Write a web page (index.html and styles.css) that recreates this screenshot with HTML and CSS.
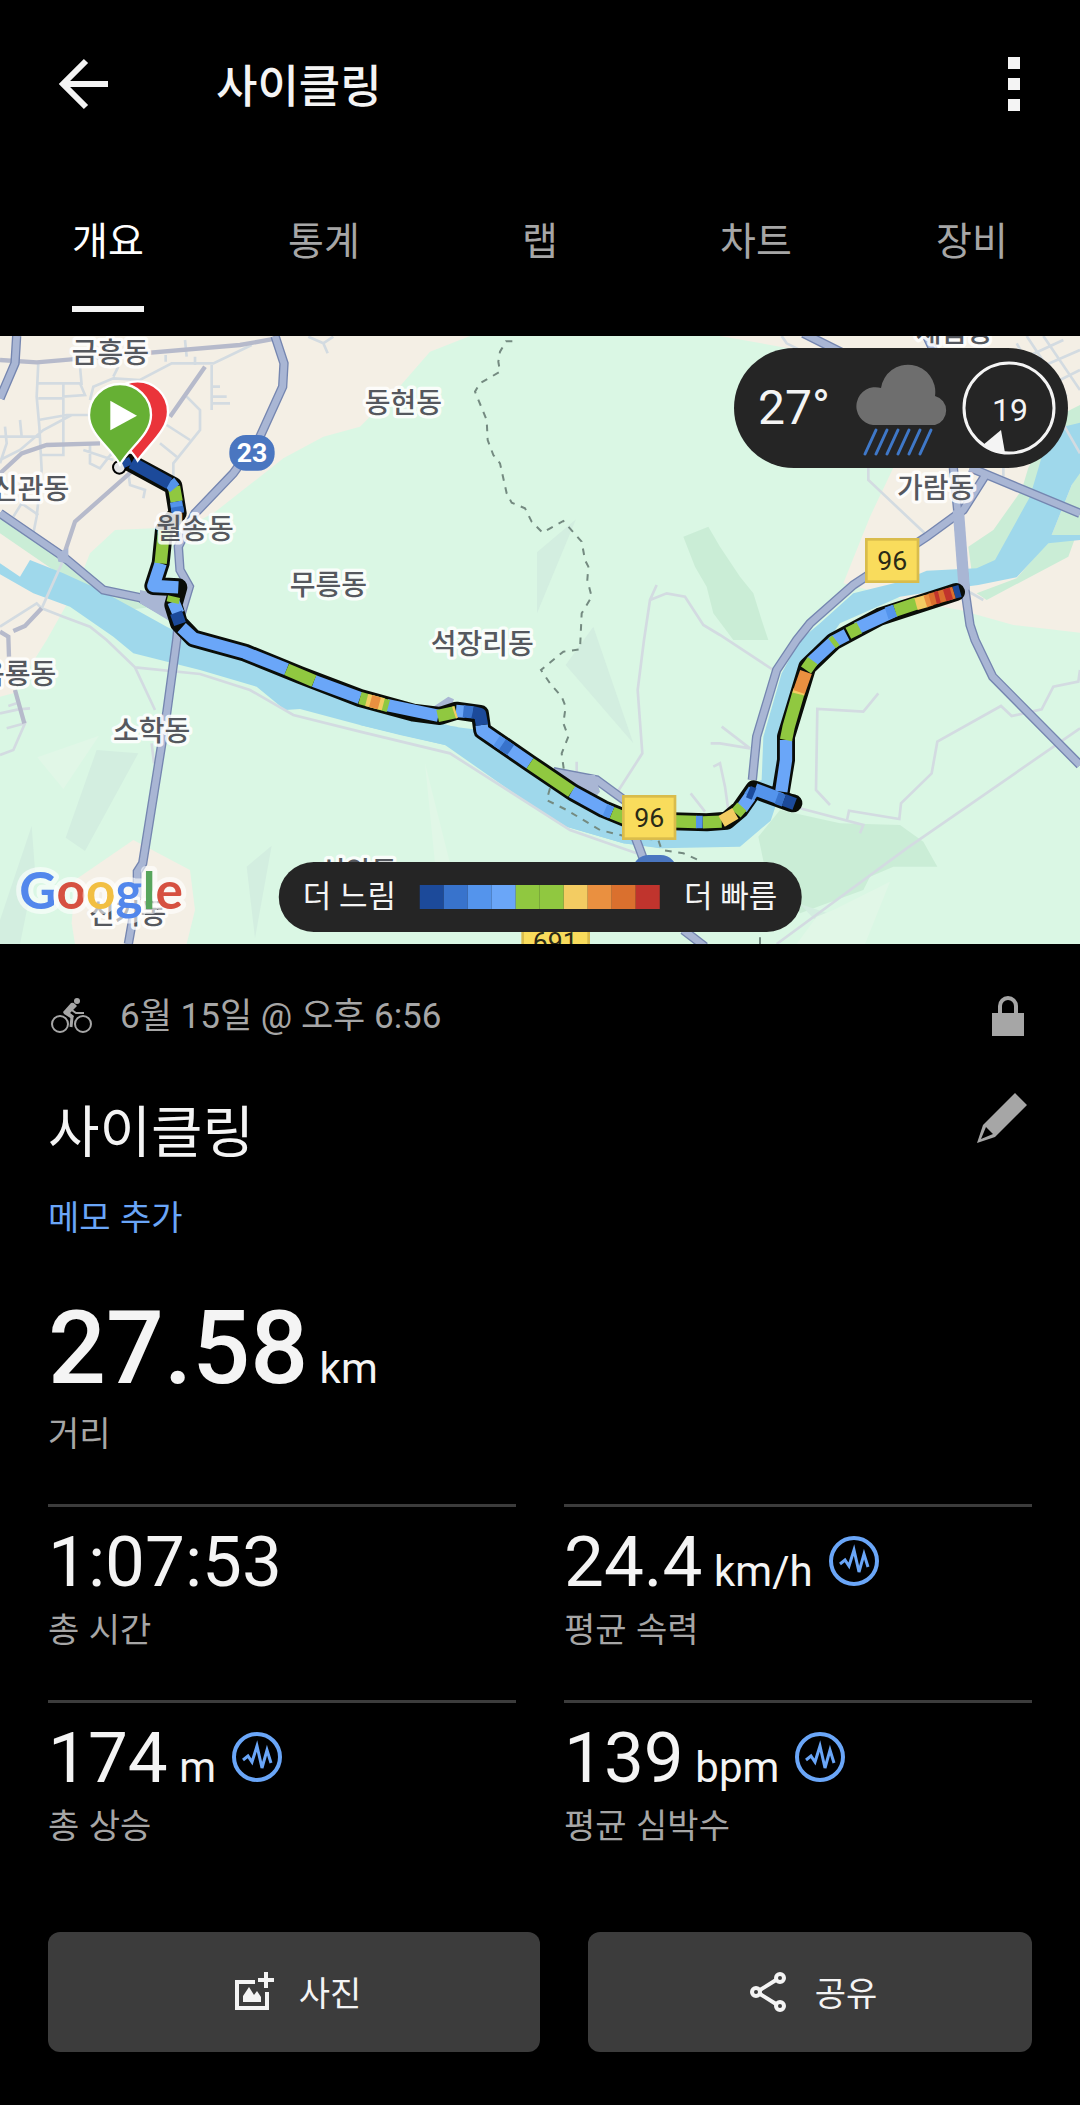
FILE: index.html
```html
<!DOCTYPE html>
<html lang="ko">
<head>
    <meta charset="UTF-8">
    <meta name="viewport" content="width=device-width, initial-scale=1">
    <title>사이클링</title>
    <link rel="stylesheet" href="styles.css">
</head>
<body>
    <header class="topbar">
        <button class="icon-btn back" aria-label="뒤로">
            <svg width="72" height="72" viewBox="0 0 72 72"><path d="M60 36H17M38 13L15 36l23 23" fill="none" stroke="#f4f4f4" stroke-width="6"/></svg>
        </button>
        <h1>사이클링</h1>
        <button class="icon-btn" aria-label="메뉴">
            <svg width="48" height="72" viewBox="0 0 48 72"><path d="M24 9h12v12H24zM24 30h12v12H24zM24 51h12v12H24z" fill="#f4f4f4"/></svg>
        </button>
    </header>
    <nav class="tabs">
        <a href="#" class="selected">개요</a>
        <a href="#">통계</a>
        <a href="#">랩</a>
        <a href="#">차트</a>
        <a href="#">장비</a>
    </nav>

    <section class="map">
        <svg class="map-canvas" viewBox="0 18 3240 1824">
            <rect y="18" width="3240" height="1824" fill="#daf7e4"/>
            <!-- built-up areas -->
            <g fill="#f4efe5">
                <path d="M0 18H1410L1290 65 1190 180 1080 290 970 320 850 385 640 550 560 590 345 600 270 670 230 770 140 930 40 1090 0 1100z"/>
                <path d="M2160 18L2340 50 2560 90 2680 413 2610 560 2530 760 2740 815 2880 840 3040 885 3240 908V18z"/>
                <path d="M400 1530L570 1620 585 1740 560 1842H225L215 1780 225 1650z"/>
            </g>
            <!-- woods and relief -->
            <g fill="#caedd6">
                <path d="M0 560L190 690 310 780 420 810 460 830 400 838 190 740 0 610z"/>
                <path d="M2050 620L2125 590 2160 650 2220 740 2260 790 2285 870 2305 930H2200L2140 850 2120 770 2085 710z"/>
                <path d="M3085 413L3065 480 2980 600 2905 650 2915 725 3000 700 3110 500 3190 340 3240 290V225L3170 260z"/>
                <path d="M3240 420L3215 465 3155 615 3240 615zM2930 790L3050 745 3140 640 3225 625 3205 680 2960 810z"/>
                <path d="M2275 1520L2340 1440 2520 1480 2700 1485 2770 1535 2812 1610H2680L2610 1640 2590 1680 2400 1750 2300 1640z"/>
            </g>
            <g fill="#d3eee0">
                <path d="M1611 667L1728 568 1611 850zM1780 890L1697 1005 1900 1240z"/>
                <path d="M290 1260L415 1270 255 1563 197 1523zM95 1488L105 1620 60 1842H0V1770zM740 1610L815 1547 765 1825z"/>
                <path d="M2400 1722L2500 1755 2515 1790 2495 1803 2440 1765z"/>
            </g>
            <g fill="#e1f7e7">
                <path d="M112 1282L297 1217 190 1377zM1275 1300L1350 1600H1305zM2500 1740L2670 1655 2595 1842H2390L2450 1760z"/>
            </g>
            <!-- river -->
            <path fill="#9fd8eb" d="M0 700L60 740 90 690 190 730 300 780 400 835 500 890 580 930 720 975 900 1040 1080 1108 1360 1190 1440 1200 1600 1330 1800 1430 1870 1475 2100 1490 2220 1460 2260 1360 2285 1350 2290 1220 2345 1030 2400 930 2460 880 2560 790 2700 755 2780 722 2930 715 2985 690 3090 500 3140 330 3190 290 3240 278V430L3215 465 3155 615H3240V630L3145 640 3050 742 2935 765 2860 775 2700 800 2520 880 2420 1020 2370 1200 2340 1390 2312 1472 2220 1550 1980 1555 1870 1540 1700 1490 1630 1420 1615 1380 1500 1290 1335 1245 1200 1215 1080 1185 900 1137 855 1140 770 1070 600 1020 400 970 340 920 210 830 100 790 0 733z"/>
            <path fill="#9fd8eb" d="M1290 1180L1370 1190 1620 1350 1625 1380 1700 1430 1860 1500 1990 1510V1555L1870 1540 1700 1490 1600 1430 1335 1245 1080 1185V1110z"/>
            <!-- small streets -->
            <g class="street">
                <path d="M115 97L110 200 118 290 125 420 110 560 100 610M110 160H240L255 195 190 200V160M115 205H190V375H125M240 110L245 165M0 320H120M115 270L200 255 300 255M0 390L60 360 130 300 215 255M60 270L65 320M15 290L20 340 0 400"/>
                <path d="M340 140L355 110M270 210L280 170 340 145 420 150 515 100H640L755 45M635 105V240M635 170H660M635 200H680M635 220H690M560 200L600 240V300L520 400V450M500 285L570 330M480 340L530 380M555 30L560 80M497 75V95M585 80V105M925 20L970 40 1000 20M970 40L983 70"/>
                <path d="M270 345V400L300 415 335 370M250 360L340 390M385 430L390 465 435 480 430 505M40 560L65 520 115 555M190 690L125 835 190 860 270 890 320 930 405 1012 465 1140M125 835L110 820 0 890M405 1012L600 1032 750 1080 880 1155 1080 1205 1350 1270 1710 1500 1910 1570M455 1240L462 1300M0 1150L55 1138 90 1135M20 1195L75 1180 40 1260 0 1275M25 1128L50 1120"/>
                <path d="M1970 765L1950 810 1932 930 1913 1080 1927 1270 1850 1390M1950 810L2000 790 2055 800 2110 885 2160 915 2320 1020M2132 1240H2160L2250 1255M2165 1190L2250 1255M2140 1310L2160 1300 2175 1370 2185 1440M1730 1295V1350M2072 1390L2115 1445"/>
                <path d="M2345 18L2360 40 2420 70M2605 413V450L2780 615M2635 1090L2590 1145 2452 1137 2448 1380 2490 1425M2400 1435L2590 1485 2580 1510M2540 1475L2547 1442 2698 1467 2703 1420 2795 1330 2812 1235 3003 1128 3035 1158 3125 1138 3160 1070 3235 1055 3240 1020M3240 1195L2720 1555 2330 1842"/>
                <path d="M2880 770L2950 810M3050 40L3240 370M3080 18L3200 200M3130 18L3240 180M3060 90L3190 30M3080 130L3240 60M3100 190L3240 120M3010 413V440"/>
            </g>
            <!-- secondary roads -->
            <g fill="none" stroke="#b6bacb" stroke-width="13">
                <path d="M0 90L110 97 250 85 720 45 830 25M615 110L510 260M0 430L65 370 140 345 300 340M400 420L225 575 190 680M125 835L75 888 40 903M0 905L25 920 27 980M45 1080L73 1180"/>
            </g>
            <!-- highways -->
            <g class="road-edge">
                <path id="r1" d="M825 18L852 100 848 170 780 320 700 430 585 550 535 650 540 720 568 770 535 880 530 930 500 1150 428 1600 412 1625V1690L385 1842"/>
                <path id="r2" d="M0 550L190 680 310 780 420 803 520 860"/>
                <path id="r3" d="M2860 413L2875 560 2895 780 2910 885 2925 930 2978 1040 3240 1305"/>
                <path id="r4" d="M2910 413L3240 550M2410 10L2540 75M2780 18L2800 60"/>
                <path id="r5" d="M2960 430L2890 540 2780 620 2560 765 2430 880 2390 930 2330 1020 2270 1220 2257 1350"/>
                <path id="r6" d="M50 18L45 100 0 205M1660 1325L1790 1350 1900 1430M1905 1520L1935 1600M2050 1800L2115 1850"/>
            </g>
            <g class="road">
                <use href="#r1"/><use href="#r2"/><use href="#r3"/><use href="#r4"/><use href="#r5"/><use href="#r6"/>
            </g>
            <path fill="#a9b6d4" d="M420 780L520 800V880L420 820zM170 670L205 655 205 700 175 695zM1690 1335L1785 1335 1800 1385 1770 1420 1740 1400zM1300 1130L1345 1100 1362 1108 1350 1140z"/>
            <path fill="none" stroke="#a9b6d4" stroke-width="34" d="M2875 540L2893 780"/>
            <!-- administrative border -->
            <g fill="none" stroke="#748a80" stroke-width="6" stroke-dasharray="20 20">
                <path d="M1537 34H1518L1500 65 1495 95 1500 125 1440 160 1425 185 1460 270 1463 330 1480 375 1500 400 1520 490 1535 518 1575 535 1595 575 1628 608 1690 573 1745 635 1755 690 1765 710 1762 750 1775 800 1745 850 1740 958 1690 965 1623 1020 1650 1060 1685 1100 1697 1130 1690 1180 1705 1220 1685 1270 1693 1330"/>
                <path d="M1650 1375L1640 1410 1700 1440 1800 1500 1880 1520 1975 1530 1985 1560 2050 1570 2100 1592M2280 1822V1842"/>
            </g>

            <!-- recorded track -->
            <g class="track-edge">
                <path d="M390 398L520 468 533 550 492 600 482 700 460 768 535 772 520 825 537 880 580 925 735 968 900 1035 1080 1104 1240 1148 1320 1158 1370 1142 1440 1152 1447 1202 1590 1300 1720 1388 1810 1437 1890 1470 2120 1477 2180 1472 2220 1438 2262 1378 2370 1418 2380 1420M2340 1400L2358 1290 2358 1220 2422 1010 2500 935 2640 860 2850 792 2868 786"/>
            </g>
            <circle cx="358" cy="412" r="19" fill="#e6e6e6" stroke="#000" stroke-width="6"/>
            <path d="M368 403L392 392" stroke="#1c4a9a" stroke-width="24"/>
            <g class="track">
                <g stroke="#6aa6f8">
                    <path d="M482 700L460 768 535 772M520 815L535 850M545 893L580 925 735 968 860 1018M942 1053L1080 1104M1160 1125L1315 1157M1368 1143L1395 1145M1445 1185L1447 1202 1590 1300M1715 1385L1810 1437 1836 1448M2225 1435L2250 1400M2344 1385L2358 1290V1230M2435 995L2500 935 2540 914M2570 895L2685 842"/>
                </g>
                <g stroke="#90c840">
                    <path d="M522 470L530 515M492 600L482 700M522 800L518 818M860 1018L942 1053M1080 1104L1165 1128M1313 1158L1368 1146M1590 1300L1715 1385M1836 1448L1890 1470 2090 1476M2108 1477L2165 1475M2208 1450L2226 1430M2358 1230L2366 1190 2395 1090M2418 1020L2438 992M2496 940L2508 931M2545 910L2578 893M2685 842L2750 820"/>
                </g>
                <g stroke="#5494ec">
                    <path d="M1490 1232L1507 1243M1815 1440L1834 1448M2088 1476H2108M2265 1378L2345 1408M2248 1400L2262 1380M2660 850L2685 842M528 515L534 550M508 455L524 475"/>
                </g>
                <g stroke="#3873cc">
                    <path d="M1390 1144L1420 1147M1507 1243L1532 1260M2330 1404L2352 1412M531 530L534 548"/>
                </g>
                <g stroke="#1c4a9a">
                    <path d="M395 398L508 460M528 848L540 882M1418 1147L1440 1152 1446 1185M2245 1385L2262 1392M2352 1410L2384 1422M2862 788L2880 783"/>
                </g>
                <g stroke="#f3cc62">
                    <path d="M1100 1110L1150 1123M2165 1474L2206 1450M2748 822L2780 813M2395 1092L2398 1080M1362 1148L1368 1146"/>
                </g>
                <g stroke="#ea9040">
                    <path d="M1112 1113L1138 1120M2397 1086L2418 1026M2776 814L2795 808"/>
                </g>
                <path stroke="#da702e" d="M2790 809L2862 788"/>
                <path stroke="#c0342d" d="M2806 804L2818 801M2834 796L2854 790"/>
            </g>

            <!-- start and finish pins -->
            <path class="pin" fill="#ea343a" d="M413 392C390 350 322 310 322 245a91 91 0 0 1 182 0C504 300 450 340 413 392z"/>
            <path class="pin" fill="#66b034" d="M360 404C330 350 267 315 267 255a93 93 0 0 1 186 0C453 315 390 350 360 404z"/>
            <path fill="#fff" d="M331 212L411 257 331 301z"/>

            <!-- place names -->
            <g class="place">
                <text x="331" y="100">금흥동</text>
                <text x="1210" y="248">동현동</text>
                <text x="92" y="507">신관동</text>
                <text x="585" y="626">월송동</text>
                <text x="985" y="795">무릉동</text>
                <text x="1447" y="973">석장리동</text>
                <text x="53" y="1063">옥룡동</text>
                <text x="455" y="1232">소학동</text>
                <text x="383" y="1782">신기동</text>
                <text x="1075" y="1656">신암동</text>
                <text x="2863" y="36">새롬동</text>
                <text x="2807" y="504">가람동</text>
            </g>

            <!-- road numbers -->
            <rect x="688" y="315" width="136" height="107" rx="50" fill="#4a76c0"/>
            <rect x="1896" y="1575" width="136" height="107" rx="50" fill="#4a76c0"/>
            <text class="road-no light" x="756" y="397">23</text>
            <g fill="#f9dc5c" stroke="#d9bc4c" stroke-width="8">
                <rect x="2599" y="628" width="155" height="127"/>
                <rect x="1870" y="1399" width="155" height="127"/>
                <rect x="1568" y="1770" width="198" height="127"/>
            </g>
            <text class="road-no" x="2677" y="720">96</text>
            <text class="road-no" x="1948" y="1491">96</text>
            <text class="road-no" x="1666" y="1862">691</text>

            <text class="logo" x="58" y="1736"><tspan fill="#5287ec">G</tspan><tspan fill="#d65141">o</tspan><tspan fill="#f2bf42">o</tspan><tspan fill="#5287ec">g</tspan><tspan fill="#58a55c">l</tspan><tspan fill="#d65141">e</tspan></text>
        </svg>

        <div class="weather">
            <span class="temp">27°</span>
            <svg class="rain" width="96" height="96" viewBox="0 0 96 96">
                <path d="M19 65a19 19 0 1 1 8-37a27 27 0 0 1 54 8a15 15 0 0 1 0 29z" fill="#6e6e6e"/>
                <path d="M22 70L11 94M33 70L22 94M44 70L33 94M55 70L44 94M66 70L55 94M77 70L66 94" stroke="#3f78c8" stroke-width="3" stroke-linecap="round"/>
            </svg>
            <svg class="wind" width="94" height="94" viewBox="0 0 94 94">
                <circle cx="47" cy="47" r="45" fill="none" stroke="#f4f4f4" stroke-width="3"/>
                <path d="M39 69L21 84Q31 91 43 92z" fill="#f4f4f4"/>
                <text x="48" y="60">19</text>
            </svg>
        </div>

        <div class="legend">
            <span>더 느림</span>
            <div class="scale">
                <i class="s1"></i><i class="s2"></i><i class="s3"></i><i class="s4"></i><i class="s5"></i><i class="s5"></i><i class="s6"></i><i class="s7"></i><i class="s8"></i><i class="s9"></i>
            </div>
            <span>더 빠름</span>
        </div>
    </section>

    <main class="details">
        <div class="date-row">
            <svg width="48" height="48" viewBox="0 0 48 48">
                <g fill="none" stroke="#a6a6a6">
                    <circle cx="12" cy="32" r="8" stroke-width="2"/>
                    <circle cx="35" cy="32" r="8" stroke-width="2"/>
                    <path d="M21 16l7 5h8" stroke-width="2"/>
                    <path d="M18 20l6 5-1 10" stroke-width="3"/>
                </g>
                <path d="M15 20l8-9q2-1 4 1l2 2-7 7 4 3-2 3-8-5z" fill="#a6a6a6"/>
                <circle cx="29" cy="9" r="3" fill="#a6a6a6"/>
            </svg>
            <span>6월 15일 @ 오후 6:56</span>
            <svg class="lock" width="48" height="48" viewBox="0 0 48 48">
                <path d="M8 21h32v23H8z" fill="#a6a6a6"/>
                <path d="M16 22v-8a8 8 0 0 1 16 0v8" fill="none" stroke="#a6a6a6" stroke-width="4"/>
            </svg>
        </div>
        <div class="title-row">
            <h2>사이클링</h2>
            <button class="icon-btn" aria-label="이름 수정">
                <svg width="60" height="60" viewBox="0 0 60 60"><path fill="#a6a6a6" fill-rule="evenodd" d="M43 5L55 17 23 49 5 55 11 37zM14 39L9 51 21 46z"/></svg>
            </button>
        </div>
        <a href="#" class="memo">메모 추가</a>

        <div class="distance">27.58 <small>km</small></div>
        <div class="label">거리</div>

        <div class="stats">
            <div class="stat">
                <div class="value">1:07:53</div>
                <div class="label">총 시간</div>
            </div>
            <div class="stat">
                <div class="value">24.4 <small>km/h</small><a href="#" aria-label="속력 차트"><svg class="pulse" viewBox="0 0 50 50"><circle cx="25" cy="25" r="23"/><path d="M11 28l5-4 4 6 5-16 5 22 5-18 4 13"/></svg></a></div>
                <div class="label">평균 속력</div>
            </div>
            <div class="stat">
                <div class="value">174 <small>m</small><a href="#" aria-label="고도 차트"><svg class="pulse" viewBox="0 0 50 50"><circle cx="25" cy="25" r="23"/><path d="M11 28l5-4 4 6 5-16 5 22 5-18 4 13"/></svg></a></div>
                <div class="label">총 상승</div>
            </div>
            <div class="stat">
                <div class="value">139 <small>bpm</small><a href="#" aria-label="심박수 차트"><svg class="pulse" viewBox="0 0 50 50"><circle cx="25" cy="25" r="23"/><path d="M11 28l5-4 4 6 5-16 5 22 5-18 4 13"/></svg></a></div>
                <div class="label">평균 심박수</div>
            </div>
        </div>
    </main>

    <footer class="actions">
        <div class="action">
            <button>
                <svg width="48" height="48" viewBox="0 0 48 48">
                    <path d="M28 14H10v26h30V24" fill="none" stroke="#f4f4f4" stroke-width="4"/>
                    <path d="M16 34v-6l6-9 5 8 3-4 4 6v5z" fill="#f4f4f4"/>
                    <path d="M39 4v16M31 12h16" stroke="#f4f4f4" stroke-width="4"/>
                </svg>
                사진
            </button>
        </div>
        <div class="action">
            <button>
                <svg width="48" height="48" viewBox="0 0 48 48" fill="none" stroke="#f4f4f4" stroke-width="4">
                    <circle cx="37" cy="10" r="4"/>
                    <circle cx="13" cy="24" r="4"/>
                    <circle cx="37" cy="38" r="4"/>
                    <path d="M17 22l16-10M17 26l16 10"/>
                </svg>
                공유
            </button>
        </div>
    </footer>
</body>
</html>
```
FILE: styles.css
```css
*{
    margin: 0;
    padding: 0;
    box-sizing: border-box;
}
body{
    background: #000;
    color: #f4f4f4;
    font-family: Roboto, "Noto Sans CJK KR", sans-serif;
    font-size: 35px;
    line-height: 48px;
}
h1,h2,.memo,.label,.action button{
    font-family: "Noto Sans CJK KR", sans-serif;
}
a{
    color: inherit;
    text-decoration: none;
}
svg{
    display: block;
}
button{
    border: 0;
    background: none;
    color: inherit;
    font: inherit;
    cursor: pointer;
}
.icon-btn{
    flex: none;
}

/* header */
.topbar{
    display: flex;
    align-items: center;
    height: 168px;
    padding: 0 48px;
}
.topbar h1{
    flex: 1;
    margin-left: 96px;
    font-size: 45px;
    font-weight: 500;
    line-height: 64px;
}
.tabs{
    display: grid;
    grid-template-columns: repeat(5, 1fr);
    justify-items: center;
    padding: 46px 0 24px;
}
.tabs a{
    padding-bottom: 36px;
    border-bottom: 6px solid transparent;
    font-size: 39px;
    line-height: 56px;
    color: #a6a6a6;
}
.tabs .selected{
    color: #fff;
    border-color: #f4f4f4;
}

/* map */
.map{
    position: relative;
}
.map-canvas{
    width: 100%;
    height: auto;
}
.street{
    fill: none;
    stroke: #d3dbe1;
    stroke-width: 8;
}
.road-edge{
    fill: none;
    stroke: #7586b0;
    stroke-width: 28;
}
.road{
    fill: none;
    stroke: #a9b6d4;
    stroke-width: 20;
}
/* the same paths are reused for the road fill */
.road-edge path{
    stroke-width: inherit;
}
.track-edge{
    fill: none;
    stroke: #0a0d08;
    stroke-width: 54;
    stroke-linejoin: round;
    stroke-linecap: round;
}
.track{
    fill: none;
    stroke-width: 37;
    stroke-linejoin: round;
}
.pin{
    stroke: #fff;
    stroke-width: 7;
}
.place{
    fill: #55585e;
    stroke: #fff;
    stroke-opacity: .85;
    stroke-width: 20;
    stroke-linejoin: round;
    paint-order: stroke;
    font-size: 84px;
    font-weight: 500;
    text-anchor: middle;
}
.road-no{
    fill: #2a2a16;
    font-size: 80px;
    text-anchor: middle;
}
.light{
    fill: #fff;
    font-weight: 700;
}
.logo{
    font-family: Lato, sans-serif;
    font-size: 154px;
    font-weight: 700;
    stroke: #fff;
    stroke-opacity: .6;
    stroke-width: 30;
    stroke-linejoin: round;
    paint-order: stroke;
}
.weather,.legend{
    position: absolute;
    display: flex;
    align-items: center;
    background: #252525;
    border-radius: 60px;
}
.weather{
    top: 12px;
    right: 12px;
    height: 120px;
    padding: 0 12px 0 24px;
}
.temp{
    font-size: 48px;
    line-height: 60px;
}
.rain{
    margin: 0 12px 0 24px;
}
.wind text{
    fill: #f4f4f4;
    font-size: 32px;
    text-anchor: middle;
}
.legend{
    left: 50%;
    bottom: 12px;
    transform: translateX(-50%);
    gap: 24px;
    height: 70px;
    padding: 0 24px;
    font-size: 31px;
    white-space: nowrap;
}
.scale{
    display: flex;
}
.scale i{
    width: 24px;
    height: 24px;
}
.s1{ background: #1c4a9a; }
.s2{ background: #3873cc; }
.s3{ background: #5494ec; }
.s4{ background: #6aa6f8; }
.s5{ background: #90c840; }
.s6{ background: #f3cc62; }
.s7{ background: #ea9040; }
.s8{ background: #da702e; }
.s9{ background: #c0342d; }

/* activity details */
.details{
    padding: 48px 48px 0;
}
.date-row{
    display: flex;
    gap: 24px;
    line-height: 50px;
    height: 48px;
    color: #a6a6a6;
}
.lock{
    margin-left: auto;
}
.title-row{
    display: flex;
    justify-content: space-between;
    align-items: flex-start;
    margin: 48px 0 24px;
}
.title-row h2{
    font-size: 56px;
    font-weight: 400;
    line-height: 80px;
}
.memo{
    display: block;
    color: #6aa6f8;
    font-size: 34px;
}
.distance{
    margin-top: 48px;
    font-size: 102px;
    font-weight: 500;
    line-height: 120px;
}
small{
    font-size: 42px;
    font-weight: 400;
    line-height: 1;
}
.distance small{
    margin-left: -14px;
}
.label{
    color: #a6a6a6;
    font-size: 34px;
}
.stats{
    display: grid;
    grid-template-columns: 1fr 1fr;
    column-gap: 48px;
    margin-top: 48px;
}
.stat{
    padding: 12px 0 48px;
    border-top: 3px solid #3c3c3c;
}
.value{
    font-size: 71px;
    line-height: 85px;
}
.value small{
    margin-left: -6px;
}
.pulse{
    display: inline-block;
    width: 50px;
    height: 50px;
    margin-left: 16px;
    fill: none;
    stroke: #6aa6f8;
    stroke-width: 4;
}
.pulse path{
    stroke-width: 3;
}

/* bottom buttons */
.actions{
    display: flex;
    padding: 36px 0 53px;
}
.action{
    width: 50%;
    padding-left: 48px;
}
.action:last-child{
    padding-right: 48px;
}
.action button{
    display: flex;
    justify-content: center;
    align-items: center;
    gap: 24px;
    width: 100%;
    height: 120px;
    border-radius: 12px;
    background: #3c3c3c;
    font-size: 34px;
}
```
